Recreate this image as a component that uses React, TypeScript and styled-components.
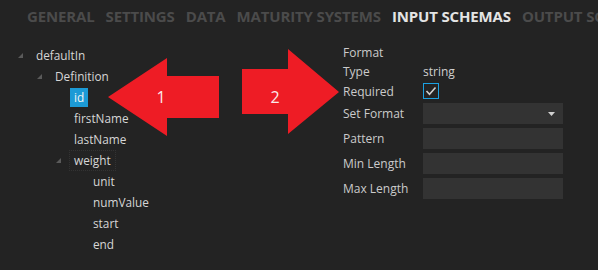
import React from 'react';
import styled, { createGlobalStyle } from 'styled-components';

const GlobalStyle = createGlobalStyle`
  html, body {
    margin: 0;
    padding: 0;
    background: #232323;
  }
  body {
    font-family: "Open Sans", "Noto Sans", sans-serif;
    width: 598px;
    height: 270px;
    overflow: hidden;
  }
`;

const Page = styled.div`
  position: relative;
  width: 598px;
  height: 270px;
  background: #232323;
  overflow: hidden;
`;

const TabBar = styled.div`
  display: flex;
  gap: 11px;
  padding: 6px 0 0 27px;
  height: 24px;
  white-space: nowrap;
  overflow: hidden;
`;

const Tab = styled.div<{ $active?: boolean }>`
  font-family: "Open Sans", sans-serif;
  font-weight: 700;
  font-size: 15px;
  line-height: 20px;
  letter-spacing: -0.15px;
  color: ${p => (p.$active ? '#e4e4e4' : '#4b4b4b')};
`;

const Body = styled.div`
  display: flex;
  align-items: flex-start;
  padding-top: 15px;
`;

const Tree = styled.div`
  width: 343px;
  display: flex;
  flex-direction: column;
`;

const TreeRow = styled.div<{ $level: number }>`
  display: flex;
  align-items: center;
  height: 21px;
  padding-left: ${p => 13 + p.$level * 19}px;
`;

const Expander = styled.div`
  width: 19px;
  height: 21px;
  display: flex;
  align-items: center;
  padding-left: 5px;
  box-sizing: border-box;
`;

const NodeLabel = styled.div<{ $selected?: boolean; $focused?: boolean }>`
  height: 19px;
  line-height: 19px;
  padding: 0 4px;
  box-sizing: border-box;
  font-size: 11.8px;
  color: ${p => (p.$selected ? '#f4f4f4' : '#d6d6d6')};
  background: ${p => (p.$selected ? '#1c9ad6' : 'transparent')};
  outline: ${p => (p.$focused ? '1px dotted #333333' : 'none')};
`;

const Form = styled.div`
  display: grid;
  grid-template-columns: 80px 140px;
  align-content: start;
  margin-top: -3px;
`;

const FieldLabel = styled.div<{ $h: number; $mt?: number }>`
  height: ${p => p.$h}px;
  margin-top: ${p => p.$mt ?? 0}px;
  display: flex;
  align-items: center;
  font-size: 12px;
  color: #cbcbcb;
`;

const FieldValue = styled(FieldLabel)`
  color: #d0d0d0;
`;

const Checkbox = styled.div`
  width: 16px;
  height: 16px;
  box-sizing: border-box;
  border: 1px solid #1ba1e2;
  display: flex;
  align-items: center;
  justify-content: center;
`;

const InputBox = styled.div`
  width: 140px;
  height: 21px;
  background: #333333;
  display: flex;
  align-items: center;
  justify-content: flex-end;
  padding-right: 8px;
  box-sizing: border-box;
`;

const Overlay = styled.svg`
  position: absolute;
  left: 0;
  top: 0;
  pointer-events: none;
`;

function Triangle() {
  return (
    <svg width="5" height="5" viewBox="0 0 5 5">
      <polygon points="5,0 5,5 0,5" fill="#5a5a5a" />
    </svg>
  );
}

type Node = { label: string; level: number; open?: boolean; selected?: boolean; focused?: boolean };

const nodes: Node[] = [
  { label: 'defaultIn', level: 0, open: true },
  { label: 'Definition', level: 1, open: true },
  { label: 'id', level: 2, selected: true },
  { label: 'firstName', level: 2 },
  { label: 'lastName', level: 2 },
  { label: 'weight', level: 2, open: true, focused: true },
  { label: 'unit', level: 3 },
  { label: 'numValue', level: 3 },
  { label: 'start', level: 3 },
  { label: 'end', level: 3 },
];

const tabs = ['GENERAL', 'SETTINGS', 'DATA', 'MATURITY SYSTEMS', 'INPUT SCHEMAS', 'OUTPUT SCHEMAS'];

export default function App() {
  return (
    <Page>
      <GlobalStyle />
      <TabBar>
        {tabs.map(t => (
          <Tab key={t} $active={t === 'INPUT SCHEMAS'}>{t}</Tab>
        ))}
      </TabBar>
      <Body>
        <Tree>
          {nodes.map(n => (
            <TreeRow key={n.label} $level={n.level}>
              <Expander>{n.open && <Triangle />}</Expander>
              <NodeLabel $selected={n.selected} $focused={n.focused}>{n.label}</NodeLabel>
            </TreeRow>
          ))}
        </Tree>
        <Form>
          <FieldLabel $h={20}>Format</FieldLabel>
          <FieldValue $h={20}></FieldValue>
          <FieldLabel $h={19}>Type</FieldLabel>
          <FieldValue $h={19}>string</FieldValue>
          <FieldLabel $h={20}>Required</FieldLabel>
          <FieldValue $h={20}>
            <Checkbox>
              <svg width="12" height="10" viewBox="0 0 12 10">
                <polyline points="1.5,5 4.5,8.2 10.5,1.5" fill="none" stroke="#cfcfcf" strokeWidth="1.6" />
              </svg>
            </Checkbox>
          </FieldValue>
          <FieldLabel $h={21} $mt={2}>Set Format</FieldLabel>
          <FieldValue $h={21} $mt={2}>
            <InputBox>
              <svg width="7" height="4" viewBox="0 0 7 4">
                <polygon points="0,0 7,0 3.5,4" fill="#d0d0d0" />
              </svg>
            </InputBox>
          </FieldValue>
          <FieldLabel $h={21} $mt={4}>Pattern</FieldLabel>
          <FieldValue $h={21} $mt={4}><InputBox /></FieldValue>
          <FieldLabel $h={21} $mt={4}>Min Length</FieldLabel>
          <FieldValue $h={21} $mt={4}><InputBox /></FieldValue>
          <FieldLabel $h={21} $mt={4}>Max Length</FieldLabel>
          <FieldValue $h={21} $mt={4}><InputBox /></FieldValue>
        </Form>
      </Body>
      <Overlay width="598" height="270" viewBox="0 0 598 270">
        <polygon points="108,97 167,58 167,76 219,76 219,118 167,118 167,136" fill="#ee1c25" />
        <polygon points="242,69 288,69 288,49 339,92 288,134 288,114 242,114" fill="#ee1c25" />
        <text x="161" y="103" fontSize="16" fill="#fbeaea" textAnchor="middle" fontFamily="Open Sans, sans-serif">1</text>
        <text x="275" y="103" fontSize="16" fill="#fbeaea" textAnchor="middle" fontFamily="Open Sans, sans-serif">2</text>
      </Overlay>
    </Page>
  );
}
